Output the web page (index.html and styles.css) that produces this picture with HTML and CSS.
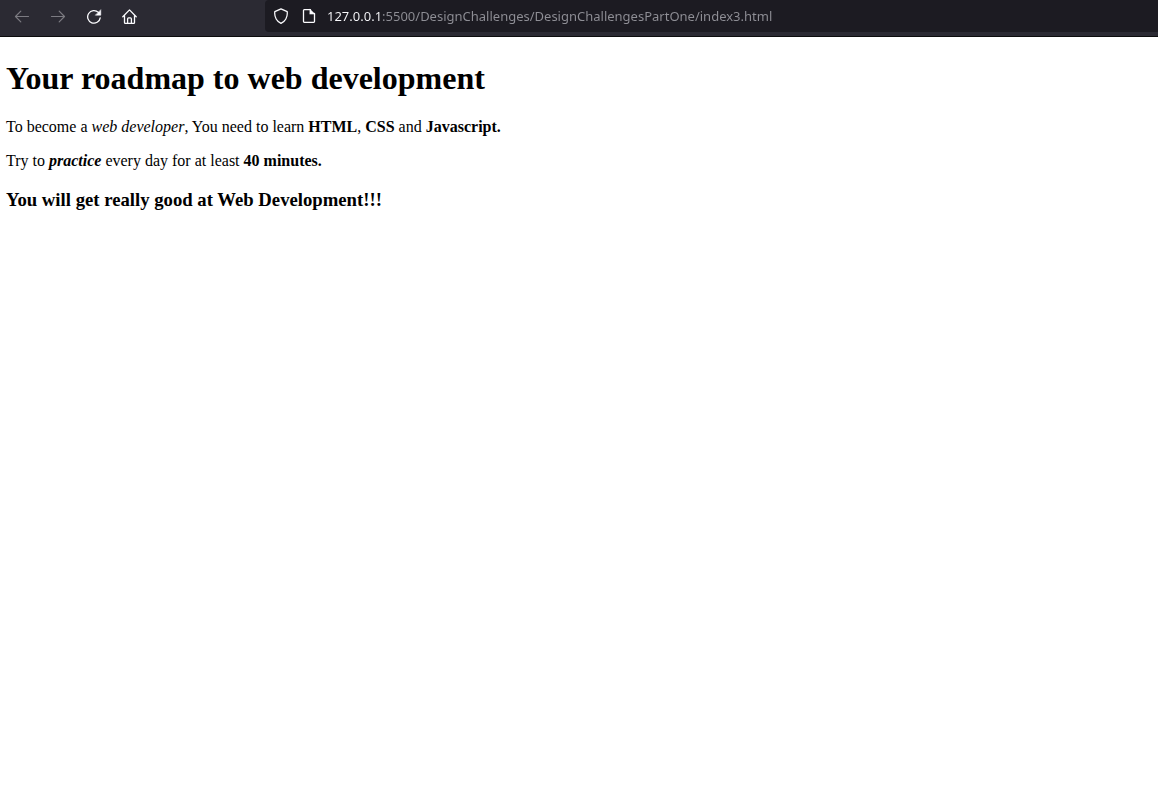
FILE: index.html
```html
<!DOCTYPE html>
<html lang="en">
<head>
  <meta charset="utf-8">
  <meta name="viewport" content="width=device-width, initial-scale=1">
  <title>Your roadmap to web development</title>
  <link rel="stylesheet" href="styles.css">
</head>
<body>
  <header class="toolbar">
    <nav class="nav-buttons" aria-label="Browser navigation">
      <button class="nav-button" type="button" aria-label="Back" disabled>
        <svg class="icon" viewBox="0 0 16 16"><path d="M14.5 8.5H1.5M6.8 3.2L1.5 8.5L6.8 13.8"/></svg>
      </button>
      <button class="nav-button" type="button" aria-label="Forward" disabled>
        <svg class="icon" viewBox="0 0 16 16"><path d="M1.5 8.5H14.5M9.2 3.2L14.5 8.5L9.2 13.8"/></svg>
      </button>
      <button class="nav-button" type="button" aria-label="Reload">
        <svg class="icon icon-strong" viewBox="0 0 16 16"><path d="M12.4 4.4A6.3 6.3 0 1 0 14.2 9.8"/><path class="solid" d="M14.8 2V7.2H9.6Z"/></svg>
      </button>
      <button class="nav-button" type="button" aria-label="Home">
        <svg class="icon icon-strong" viewBox="0 0 16 16"><path d="M.8 8.8L7.5 1.9L14.2 8.8M2.5 7.5V14.5Q2.5 15.4 3.4 15.4H11.6Q12.5 15.4 12.5 14.5V7.5M5.6 15.2V11Q5.6 9.8 6.6 9.8H8.4Q9.4 9.8 9.4 11V15.2"/></svg>
      </button>
    </nav>
    <div class="address-bar">
      <svg class="icon icon-strong" viewBox="0 0 16 16" aria-hidden="true"><path d="M8 .9L14.2 3.7C14.8 9 12 13.5 8 15.3C4 13.5 1.2 9 1.8 3.7Z"/></svg>
      <svg class="icon icon-strong" viewBox="0 0 16 16" aria-hidden="true"><path d="M9.5 1.7H3.3Q2.5 1.7 2.5 2.5V13.6Q2.5 14.4 3.3 14.4H12.7Q13.5 14.4 13.5 13.6V5.5"/><path class="solid" d="M9 1.2L13.9 6.1H9Z"/></svg>
      <input class="address" type="text" aria-label="Address" spellcheck="false" value="127.0.0.1:5500/DesignChallenges/DesignChallengesPartOne/index3.html">
    </div>
  </header>
  <main class="page">
    <h1 class="title">Your roadmap to web development</h1>
    <p class="text">To become a <em>web developer</em>, You need to learn <strong>HTML</strong>, <strong>CSS</strong> and <strong>Javascript.</strong></p>
    <p class="text">Try to <strong><em>practice</em></strong> every day for at least <strong>40 minutes.</strong></p>
    <h3 class="subtitle">You will get really good at Web Development!!!</h3>
  </main>
</body>
</html>
```

FILE: styles.css
```css
* {
  box-sizing: border-box;
}

body {
  margin: 0;
  background: #fff;
  color: #000;
  font-family: "Liberation Serif", "Times New Roman", serif;
}

.toolbar {
  display: flex;
  padding-bottom: 4px;
  background: #2b2a33;
  border-bottom: 1px solid #0c0c0d;
}

.nav-buttons {
  display: flex;
  flex: none;
  width: 265px;
  padding-left: 4px;
}

.nav-button {
  display: flex;
  align-items: center;
  justify-content: center;
  width: 36px;
  height: 32px;
  padding: 0;
  border: 0;
  background: none;
  color: #fbfbfe;
}

.nav-button:disabled {
  color: #7c7b82;
}

.icon {
  flex: none;
  width: 16px;
  height: 16px;
  fill: none;
  stroke: currentColor;
  stroke-width: 1.2;
  stroke-linecap: round;
  stroke-linejoin: round;
}

.icon-strong {
  stroke-width: 1.3;
}

.solid {
  fill: currentColor;
  stroke-width: 0.5;
}

.address-bar {
  display: flex;
  flex: 1;
  align-items: center;
  gap: 12px;
  min-width: 0;
  height: 32px;
  padding-left: 8px;
  border-radius: 4px 0 0 4px;
  background: #1c1b22;
  color: #fbfbfe;
}

/* The host is brighter than the port and path that follow it. */
.address {
  flex: 1;
  min-width: 0;
  height: 24px;
  padding: 0;
  margin-left: -2px;
  border: 0;
  outline: 0;
  font: 13px/20px "Noto Sans", "Open Sans", sans-serif;
  color: #8f8f96;
  background: linear-gradient(to right, #fbfbfe 55px, #8f8f96 55px);
  -webkit-background-clip: text;
  background-clip: text;
  -webkit-text-fill-color: transparent;
}

.page {
  padding: 23px 6px;
}

.title {
  margin: 0 0 21px;
  font-size: 32px;
  line-height: 37px;
}

.text {
  margin: 0 0 16px;
  font-size: 16px;
  line-height: 18px;
}

.subtitle {
  margin: 19px 0 0;
  line-height: 22px;
}
```
